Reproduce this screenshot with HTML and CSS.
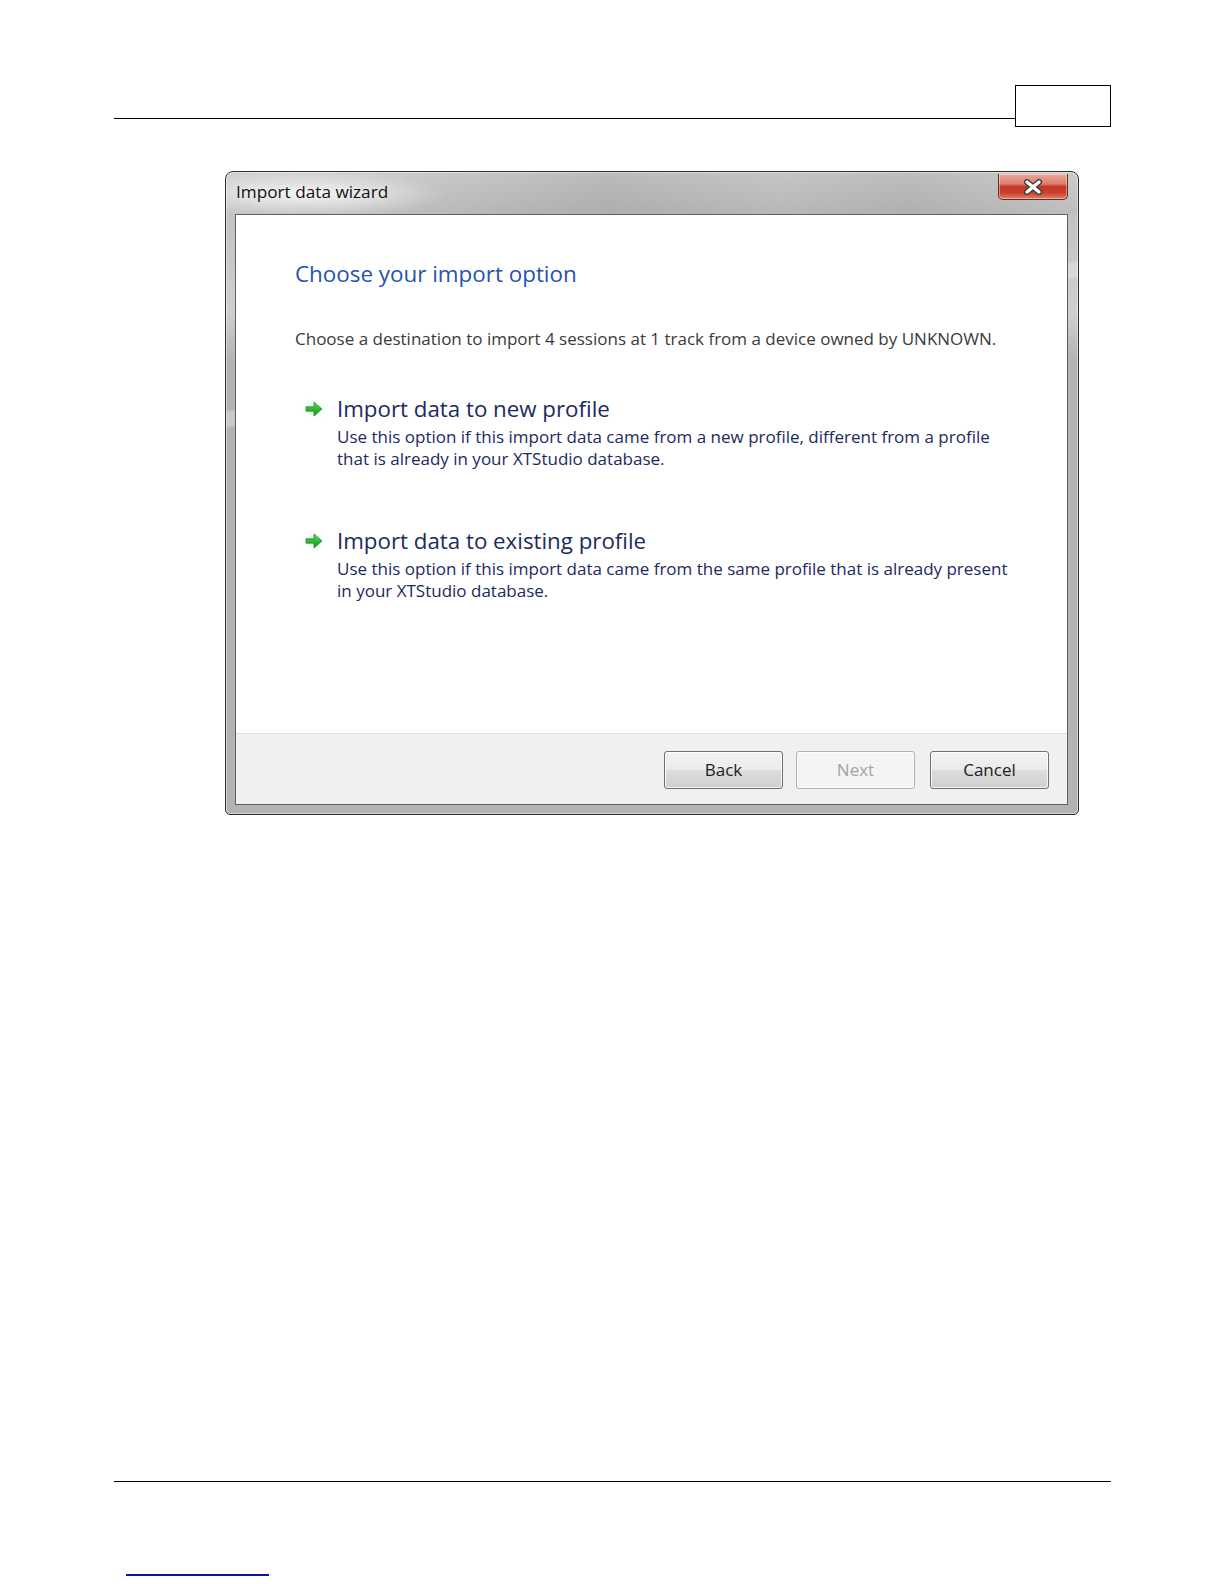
FILE: index.html
```html
<!DOCTYPE html>
<html>
<head>
<meta charset="utf-8">
<link rel="stylesheet" href="styles.css">
</head>
<body>
<div class="page">
  <div class="page-header">
    <div class="header-rule"></div>
    <div class="header-box"></div>
  </div>

  <div class="window">
    <div class="titlebar">
      <div class="title">Import data wizard</div>
      <div class="close-btn">
        <svg width="22" height="16" viewBox="0 0 22 16">
          <path d="M5 3 L17 13 M17 3 L5 13" stroke="#3b3b3b" stroke-width="6" stroke-linecap="round"/>
          <path d="M5 3 L17 13 M17 3 L5 13" stroke="#ffffff" stroke-width="3.4" stroke-linecap="round"/>
        </svg>
      </div>
    </div>
    <div class="client">
      <div class="content">
        <h1 class="heading">Choose your import option</h1>
        <p class="intro">Choose a destination to import 4 sessions at 1 track from a device owned by UNKNOWN.</p>

        <div class="option option-first">
          <div class="arrow">
            <svg width="26" height="24" viewBox="0 0 26 24">
              <defs>
                <radialGradient id="glow1" cx="50%" cy="50%" r="50%">
                  <stop offset="0" stop-color="#b6e4b6" stop-opacity="0.9"/>
                  <stop offset="1" stop-color="#ffffff" stop-opacity="0"/>
                </radialGradient>
                <linearGradient id="ag1" x1="0" y1="0" x2="0" y2="1">
                  <stop offset="0" stop-color="#5bdc55"/>
                  <stop offset="1" stop-color="#0c9418"/>
                </linearGradient>
              </defs>
              <ellipse cx="12" cy="12" rx="12" ry="11" fill="url(#glow1)"/>
              <path d="M5 9.8 H13 V5 L21 12 L13 19 V14.2 H5 Z" fill="url(#ag1)" stroke="#178a1f" stroke-width="0.7" stroke-linejoin="round"/>
            </svg>
          </div>
          <div class="option-text">
            <div class="option-title">Import data to new profile</div>
            <div class="option-desc">Use this option if this import data came from a new profile, different from a profile<br>that is already in your XTStudio database.</div>
          </div>
        </div>

        <div class="option option-second">
          <div class="arrow">
            <svg width="26" height="24" viewBox="0 0 26 24">
              <defs>
                <radialGradient id="glow2" cx="50%" cy="50%" r="50%">
                  <stop offset="0" stop-color="#b6e4b6" stop-opacity="0.9"/>
                  <stop offset="1" stop-color="#ffffff" stop-opacity="0"/>
                </radialGradient>
                <linearGradient id="ag2" x1="0" y1="0" x2="0" y2="1">
                  <stop offset="0" stop-color="#5bdc55"/>
                  <stop offset="1" stop-color="#0c9418"/>
                </linearGradient>
              </defs>
              <ellipse cx="12" cy="12" rx="12" ry="11" fill="url(#glow2)"/>
              <path d="M5 9.8 H13 V5 L21 12 L13 19 V14.2 H5 Z" fill="url(#ag2)" stroke="#178a1f" stroke-width="0.7" stroke-linejoin="round"/>
            </svg>
          </div>
          <div class="option-text">
            <div class="option-title">Import data to existing profile</div>
            <div class="option-desc">Use this option if this import data came from the same profile that is already present<br>in your XTStudio database.</div>
          </div>
        </div>
      </div>
      <div class="footer">
        <div class="btn">Back</div>
        <div class="btn btn-disabled">Next</div>
        <div class="btn btn-cancel">Cancel</div>
      </div>
    </div>
  </div>

  <div class="page-footer-rule"></div>
  <div class="page-link"></div>
</div>
</body>
</html>
```

FILE: styles.css
```css
html, body {
  margin: 0;
  padding: 0;
  background: #ffffff;
}

.page {
  width: 997px;
  margin-left: 114px;
  padding-top: 85px;
  font-family: "Open Sans", "Noto Sans", sans-serif;
}

.page-header {
  display: flex;
  align-items: flex-start;
  height: 42px;
}

.header-rule {
  flex: 1;
  height: 33px;
  border-bottom: 1px solid #000;
}

.header-box {
  width: 94px;
  height: 40px;
  border: 1px solid #000;
}

.window {
  margin-top: 44px;
  margin-left: 111px;
  width: 854px;
  height: 644px;
  border: 1px solid #2e2e2e;
  border-radius: 8px 8px 5px 5px;
  box-sizing: border-box;
  padding: 0 10px 9px 9px;
  display: flex;
  flex-direction: column;
  background:
    radial-gradient(ellipse 140px 24px at 80px 22px, rgba(255,255,255,0.8), rgba(255,255,255,0) 100%),
    linear-gradient(to right, rgba(0,0,0,0) 0, rgba(0,0,0,0.02) 20%, rgba(0,0,0,0.1) 45%, rgba(0,0,0,0.05) 65%, rgba(0,0,0,0.09) 80%, rgba(0,0,0,0.02) 100%) 0 0 / 100% 42px no-repeat,
    linear-gradient(170deg, rgba(255,255,255,0) 0, rgba(255,255,255,0) 30%, rgba(255,255,255,0.28) 30.5%, rgba(255,255,255,0.28) 32%, rgba(255,255,255,0) 32.5%),
    linear-gradient(to bottom, #d0d0d0 0, #c2c2c2 6%, #cfcfcf 22%, #b4b4b4 29%, #b3b3b3 100%);
  box-shadow: inset 0 0 0 1px rgba(255,255,255,0.45);
}

.titlebar {
  height: 42px;
  display: flex;
  justify-content: space-between;
  align-items: flex-start;
  flex: none;
}

.title {
  margin-top: 8px;
  margin-left: 1px;
  font-size: 17.2px;
  line-height: 24px;
  color: #111;
  text-shadow: 0 0 6px rgba(255,255,255,0.9);
}

.close-btn {
  margin-top: 2px;
  width: 70px;
  height: 26px;
  border: 1px solid #6a2a20;
  border-top: none;
  border-radius: 0 0 5px 5px;
  box-sizing: border-box;
  background: linear-gradient(to bottom, #e8a89a 0, #dc7e6c 40%, #c4382a 50%, #c8402c 75%, #e0826a 100%);
  box-shadow: inset 0 0 0 1px rgba(255,255,255,0.4);
  display: flex;
  align-items: center;
  justify-content: center;
}

.client {
  flex: 1;
  display: flex;
  flex-direction: column;
  border: 1px solid #5f5f5f;
  background: #fff;
}

.content {
  flex: 1;
  padding: 44px 0 0 59px;
  color: #1b2a5e;
}

.heading {
  margin: 0;
  font-weight: 400;
  font-size: 22.4px;
  line-height: 30px;
  color: #2553b0;
}

.intro {
  margin: 39px 0 0 0;
  font-size: 17px;
  line-height: 22px;
  color: #3a3a3a;
}

.option {
  display: flex;
  align-items: flex-start;
}

.option-first {
  margin-top: 44px;
}

.option-second {
  margin-top: 56px;
}

.arrow {
  width: 42px;
  flex: none;
  padding-top: 3px;
  padding-left: 6px;
  box-sizing: border-box;
}

.arrow svg {
  display: block;
}

.option-title {
  font-size: 22.3px;
  line-height: 30px;
  color: #1c2a60;
}

.option-desc {
  margin-top: 2px;
  font-size: 17px;
  line-height: 22px;
  color: #1c2a60;
}

.footer {
  height: 71px;
  flex: none;
  border-top: 1px solid #dfdfdf;
  background: #f0f0f0;
  display: flex;
  justify-content: flex-end;
  align-items: flex-start;
  padding: 17px 18px 0 0;
  box-sizing: border-box;
  gap: 13px;
}

.btn {
  width: 119px;
  height: 38px;
  box-sizing: border-box;
  border: 1px solid #707070;
  border-radius: 3px;
  background: linear-gradient(to bottom, #f3f3f3 0, #ebebeb 48%, #dddddd 52%, #cfcfcf 100%);
  box-shadow: inset 0 0 0 1px rgba(255,255,255,0.75);
  font-size: 17px;
  line-height: 36px;
  text-align: center;
  color: #222;
}

.btn-disabled {
  border-color: #adb2b5;
  background: #f4f4f4;
  color: #a3a3a3;
}

.btn-cancel {
  margin-left: 2px;
}

.page-footer-rule {
  margin-top: 666px;
  height: 0;
  border-top: 1px solid #000;
}

.page-link {
  margin-top: 92px;
  margin-left: 12px;
  width: 143px;
  height: 0;
  border-top: 2px solid #1010a0;
}
```
